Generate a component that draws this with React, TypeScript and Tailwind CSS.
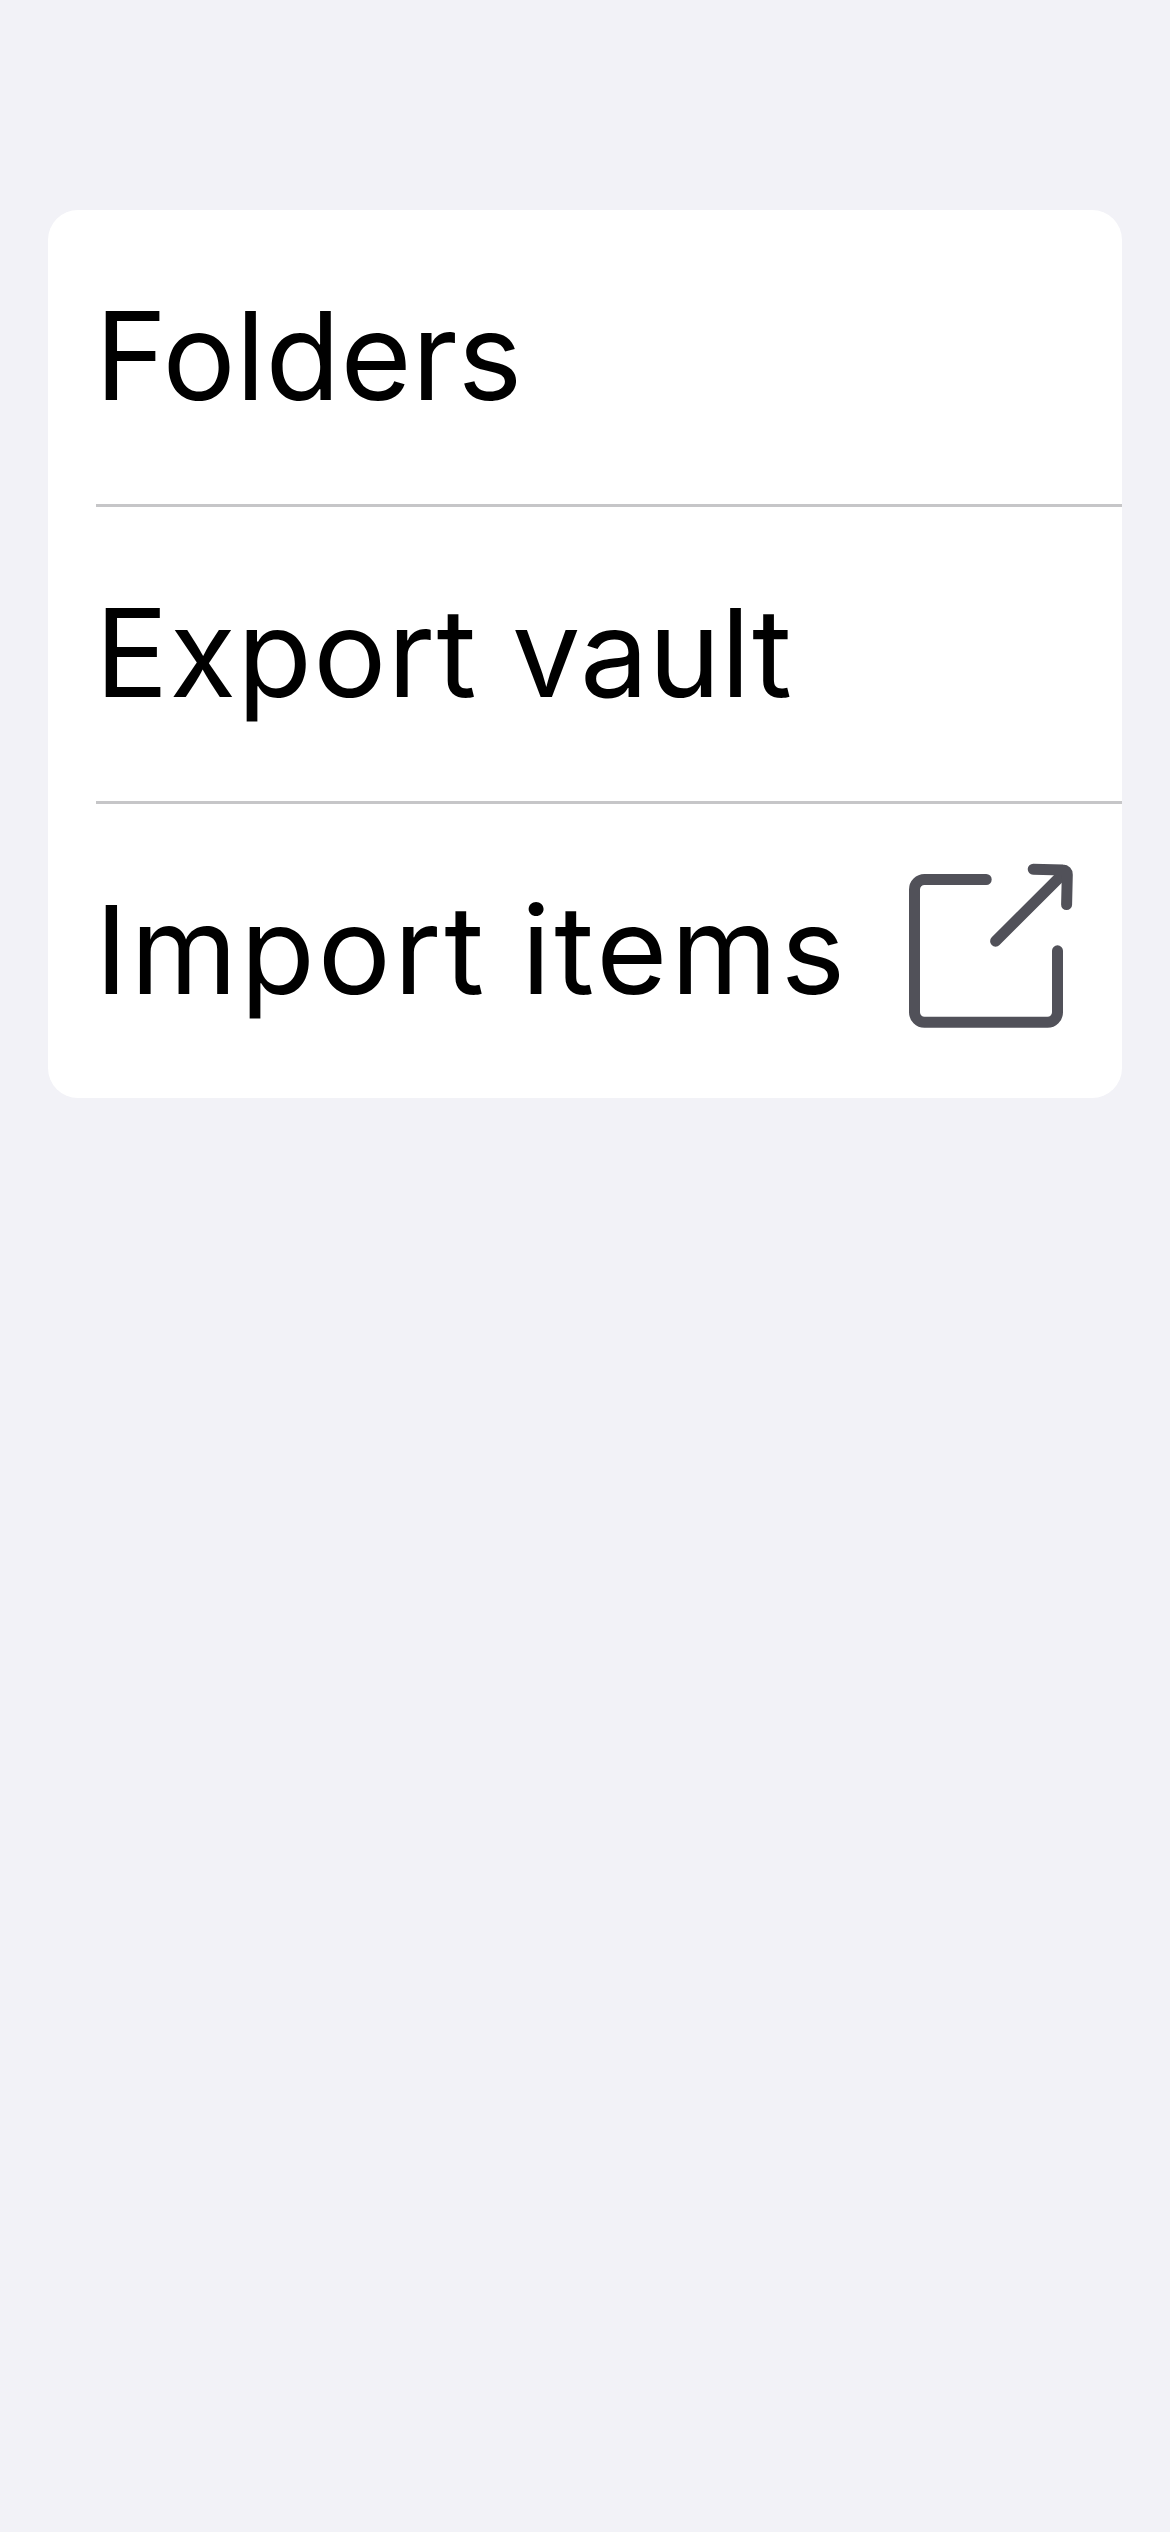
import type { ReactNode } from "react";

function ExternalLinkIcon() {
  return (
    <svg
      className="mt-9 mr-8 size-[200px] shrink-0 self-start"
      viewBox="0 0 200 200"
      fill="none"
      stroke="#515159"
      strokeWidth="11"
      strokeLinecap="round"
      strokeLinejoin="round"
      aria-hidden="true"
    >
      <path d="M96.2 39.5H34.5A10 10 0 0 0 24.5 49.5V172.3A10 10 0 0 0 34.5 182.3H157.5A10 10 0 0 0 167.5 172.3V110.8" />
      <path d="M105.6 101.2 173.5 33.3" />
      <path d="M143.2 29.2 173 30A4.3 4.3 0 0 1 177.3 34.5L176.6 64.6" />
    </svg>
  );
}

function Row({ children, icon, last = false }: { children: ReactNode; icon?: ReactNode; last?: boolean }) {
  return (
    <li
      className={
        last
          ? "flex h-[294px] items-center justify-between"
          : "flex h-[297px] items-center justify-between border-b-[3px] border-[#c6c6c8]"
      }
    >
      <span className="-ml-px pb-[3px] text-[122px] leading-none whitespace-pre">{children}</span>
      {icon}
    </li>
  );
}

export default function App() {
  return (
    <main className="h-[2532px] w-full bg-[#f2f2f7] px-12 pt-[210px] font-['Inter',sans-serif] text-black">
      <ul className="overflow-hidden rounded-[30px] bg-white pl-12">
        <Row>
          <span className="tracking-[0.2px]">Folders</span>
        </Row>
        <Row>
          <span className="tracking-[1.2px]">Export</span> vault
        </Row>
        <Row last icon={<ExternalLinkIcon />}>
          <span className="tracking-[2.8px]">Import</span> <span className="tracking-[3.3px]">items</span>
        </Row>
      </ul>
    </main>
  );
}
